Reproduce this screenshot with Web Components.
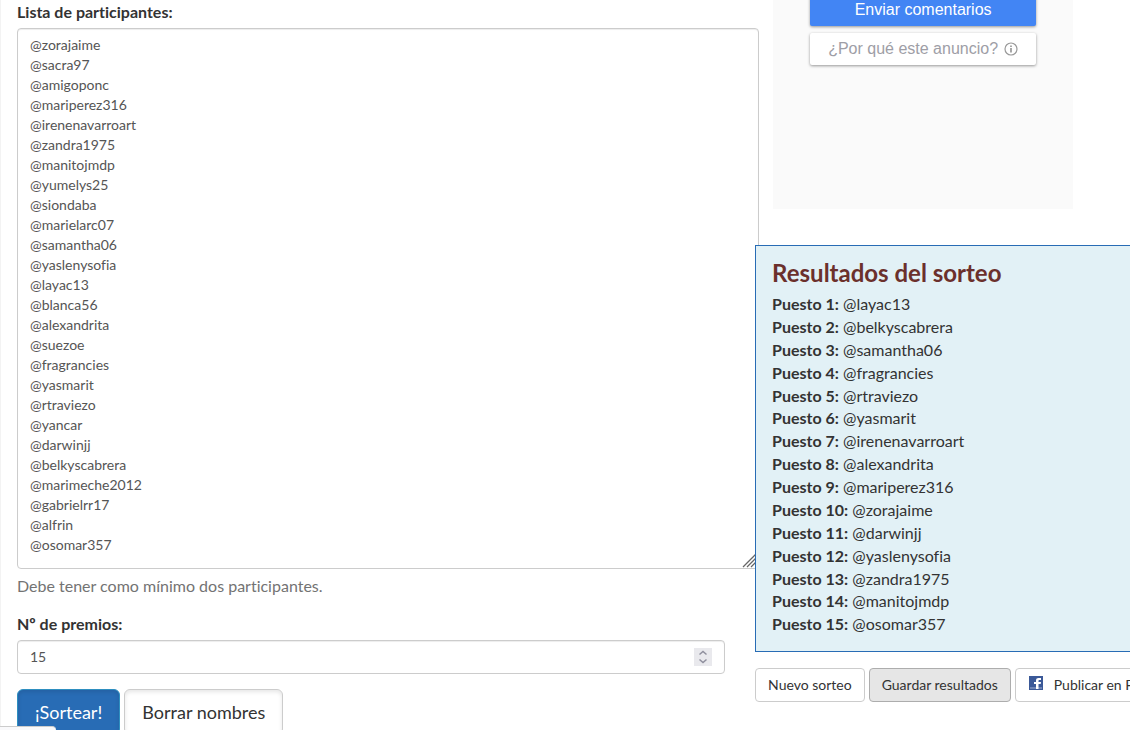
<!DOCTYPE html>
<html lang="es">
<head>
<meta charset="utf-8">
<title>Sorteo</title>
<style>
    body {
        margin: 0;
        height: 100vh;
        overflow: hidden;
        background: #fff;
        color: #333;
        font: 16px/1.43 Lato, sans-serif;
        font-variant-ligatures: none;
    }
</style>
</head>
<body>
<raffle-page>
    <raffle-form slot="main"></raffle-form>
    <ad-feedback slot="side"></ad-feedback>
    <raffle-results slot="side" heading="Resultados del sorteo"></raffle-results>
    <raffle-actions slot="side"></raffle-actions>
</raffle-page>
<status-tab></status-tab>

<script>
const participants = [
    '@zorajaime', '@sacra97', '@amigoponc', '@mariperez316', '@irenenavarroart',
    '@zandra1975', '@manitojmdp', '@yumelys25', '@siondaba', '@marielarc07',
    '@samantha06', '@yaslenysofia', '@layac13', '@blanca56', '@alexandrita',
    '@suezoe', '@fragrancies', '@yasmarit', '@rtraviezo', '@yancar', '@darwinjj',
    '@belkyscabrera', '@marimeche2012', '@gabrielrr17', '@alfrin', '@osomar357'
];

const winners = [
    '@layac13', '@belkyscabrera', '@samantha06', '@fragrancies', '@rtraviezo',
    '@yasmarit', '@irenenavarroart', '@alexandrita', '@mariperez316', '@zorajaime',
    '@darwinjj', '@yaslenysofia', '@zandra1975', '@manitojmdp', '@osomar357'
];

class RafflePage extends HTMLElement {
    constructor() {
        super();
        this.attachShadow({ mode: 'open' });
    }

    connectedCallback() {
        this.shadowRoot.innerHTML = `
            <style>
                :host {
                    display: grid;
                    grid-template-columns: minmax(0, 17fr) minmax(0, 9fr);
                    gap: 30px;
                    padding-left: 16px;
                    border-left: 1px solid #f3f3f3;
                }
                main, aside {
                    min-width: 0;
                }
                main {
                    padding-top: 1px;
                }
                aside {
                    position: relative; /* the results lie over the textarea */
                }
            </style>
            <main><slot name="main"></slot></main>
            <aside><slot name="side"></slot></aside>
        `;
    }
}

class RaffleForm extends HTMLElement {
    constructor() {
        super();
        this.attachShadow({ mode: 'open' });
    }

    connectedCallback() {
        this.shadowRoot.innerHTML = `
            <style>
                :host {
                    display: block;
                }
                label {
                    display: block;
                    margin-bottom: 4px;
                    font-weight: 700;
                }
                textarea, input {
                    box-sizing: border-box;
                    display: block;
                    margin: 0;
                    padding: 6px 12px;
                    border: 1px solid #ccc;
                    border-radius: 4px;
                    background: #fff;
                    color: #555;
                    font: 14px/20px Lato, sans-serif;
                    font-variant-ligatures: none;
                    box-shadow: inset 0 1px 1px rgba(0, 0, 0, .075);
                }
                .list {
                    position: relative;
                    width: calc(100% + 34px);
                }
                textarea {
                    width: 100%;
                    height: 541px;
                    overflow: hidden;
                    resize: vertical;
                }
                textarea::-webkit-resizer {
                    display: none;
                }
                .grip {
                    position: absolute;
                    right: 2px;
                    bottom: 1px;
                    pointer-events: none;
                }
                p {
                    margin: 6px 0 15px;
                    color: #737373;
                }
                .number {
                    position: relative;
                    margin-bottom: 15px;
                }
                input {
                    width: 100%;
                    height: 34px;
                    appearance: textfield;
                }
                input::-webkit-inner-spin-button {
                    appearance: none;
                }
                .spin {
                    position: absolute;
                    right: 13px;
                    top: 8px;
                    pointer-events: none;
                }
                .buttons {
                    display: flex;
                    gap: 4px;
                }
            </style>
            <label for="names">Lista de participantes:</label>
            <div class="list">
                <textarea id="names" spellcheck="false"></textarea>
                <svg class="grip" width="15" height="15" viewBox="0 0 15 15" stroke="#666" stroke-width="1.3">
                    <path d="M1 14L14 1M5 14L14 5M9 14L14 9"/>
                </svg>
            </div>
            <p>Debe tener como mínimo dos participantes.</p>
            <label for="prizes">Nº de premios:</label>
            <div class="number">
                <input id="prizes" type="number" min="1" value="15">
                <svg class="spin" width="18" height="18" viewBox="0 0 18 18" fill="none">
                    <path d="M0 0h18v18H0z" fill="#e9e9ed"/>
                    <path d="M5.5 6.5L9 3.5L12.5 6.5M5.5 11.5L9 14.5L12.5 11.5" stroke="#8f8f9d" stroke-width="1.5"/>
                </svg>
            </div>
            <div class="buttons">
                <raffle-button size="large" kind="primary">¡Sortear!</raffle-button>
                <raffle-button size="large">Borrar nombres</raffle-button>
            </div>
        `;
        this.shadowRoot.querySelector('textarea').value = participants.join('\n');
    }
}

class RaffleButton extends HTMLElement {
    constructor() {
        super();
        this.attachShadow({ mode: 'open' });
    }

    connectedCallback() {
        this.shadowRoot.innerHTML = `
            <style>
                :host {
                    display: block;
                    flex: none;
                }
                button {
                    display: flex;
                    align-items: center;
                    margin: 0;
                    padding: 6px 12px;
                    border: 1px solid #ccc;
                    border-radius: 4px;
                    background: #fff;
                    color: #333;
                    font: 14px/20px Lato, sans-serif;
                    font-variant-ligatures: none;
                    white-space: nowrap;
                    cursor: pointer;
                }
                :host([size="large"]) button {
                    padding: 9px 17px;
                    border-radius: 6px;
                    font-size: 18px;
                    line-height: 26px;
                    box-shadow: inset 0 2px 4px rgba(0, 0, 0, .1);
                }
                :host([kind="primary"]) button {
                    background: #286cb5;
                    border-color: #2e8fc0;
                    color: #fff;
                }
                :host([kind="active"]) button {
                    background: #e6e6e6;
                    border-color: #adadad;
                }
            </style>
            <button type="button"><slot></slot></button>
        `;
    }
}

class AdFeedback extends HTMLElement {
    constructor() {
        super();
        this.attachShadow({ mode: 'open' });
    }

    connectedCallback() {
        this.shadowRoot.innerHTML = `
            <style>
                :host {
                    box-sizing: border-box;
                    display: flex;
                    flex-direction: column;
                    align-items: center;
                    gap: 7px;
                    width: 300px;
                    height: 209px;
                    margin: 0 0 36px 18px;
                    background: #fafafa;
                }
                button {
                    display: flex;
                    justify-content: center;
                    align-items: center;
                    gap: 6px;
                    width: 226px;
                    height: 32px;
                    margin: 0;
                    padding: 0;
                    border: 0;
                    border-radius: 2px;
                    background: #fff;
                    color: #9e9ea6;
                    font: 16px/20px "Liberation Sans", Arial, sans-serif;
                    box-shadow: 0 1px 3px rgba(0, 0, 0, .4);
                }
                .send {
                    margin-top: -6px; /* the advert is scrolled under the top edge */
                    background: #4285f4;
                    color: #fff;
                }
            </style>
            <button type="button" class="send">Enviar comentarios</button>
            <button type="button">
                ¿Por qué este anuncio?
                <svg width="14" height="14" viewBox="0 0 14 14" fill="none" stroke="#999">
                    <circle cx="7" cy="7" r="6" stroke-width="1.2"/>
                    <path d="M7 6v4.5M7 3.5v1.6" stroke-width="1.7"/>
                </svg>
            </button>
        `;
    }
}

class RaffleResults extends HTMLElement {
    constructor() {
        super();
        this.attachShadow({ mode: 'open' });
    }

    connectedCallback() {
        const rows = winners.map((name, i) => `<li><b>Puesto ${i + 1}:</b> ${name}</li>`).join('');
        this.shadowRoot.innerHTML = `
            <style>
                :host {
                    display: block;
                    margin-bottom: 16px;
                    padding: 14px 16px 15px;
                    border: 1px solid #286cb5;
                    border-right: 0;
                    background: #e2f1f6;
                }
                h2 {
                    margin: 0 0 7px;
                    color: #6b302c;
                    font-size: 24px;
                    font-weight: 700;
                    line-height: 26px;
                }
                ul {
                    margin: 0;
                    padding: 0;
                    list-style: none;
                }
            </style>
            <h2>${this.getAttribute('heading')}</h2>
            <ul>${rows}</ul>
        `;
    }
}

class RaffleActions extends HTMLElement {
    constructor() {
        super();
        this.attachShadow({ mode: 'open' });
    }

    connectedCallback() {
        this.shadowRoot.innerHTML = `
            <style>
                :host {
                    display: flex;
                    gap: 4px;
                    overflow: hidden;
                }
                svg {
                    margin: 0 10px 4px 0;
                }
            </style>
            <raffle-button>Nuevo sorteo</raffle-button>
            <raffle-button kind="active">Guardar resultados</raffle-button>
            <raffle-button>
                <svg width="16" height="14" viewBox="0 0 16 14">
                    <path d="M1 0h14v14H1z" fill="#3b5998"/>
                    <path d="M2 11h12v2H2z" fill="#6d84b4"/>
                    <path d="M8 13V8H6V6h2V4.500C8 2.800 9 2 10.500 2H13v2h-1.500c-.8 0-1 .3-1 1v1H13l-.3 2h-2.200v5z" fill="#fff"/>
                </svg>
                Publicar en Facebook
            </raffle-button>
        `;
    }
}

/* Corner of the link hint, over the bottom edge of the page */
class StatusTab extends HTMLElement {
    constructor() {
        super();
        this.attachShadow({ mode: 'open' });
    }

    connectedCallback() {
        this.shadowRoot.innerHTML = `
            <style>
                :host {
                    position: fixed;
                    left: 0;
                    bottom: 0;
                    width: 56px;
                    height: 3px;
                    border-top: 1px solid #ccc;
                    border-top-right-radius: 4px;
                    background: #f9f9fb;
                }
            </style>
        `;
    }
}

customElements.define('raffle-page', RafflePage);
customElements.define('raffle-form', RaffleForm);
customElements.define('raffle-button', RaffleButton);
customElements.define('ad-feedback', AdFeedback);
customElements.define('raffle-results', RaffleResults);
customElements.define('raffle-actions', RaffleActions);
customElements.define('status-tab', StatusTab);
</script>
</body>
</html>
